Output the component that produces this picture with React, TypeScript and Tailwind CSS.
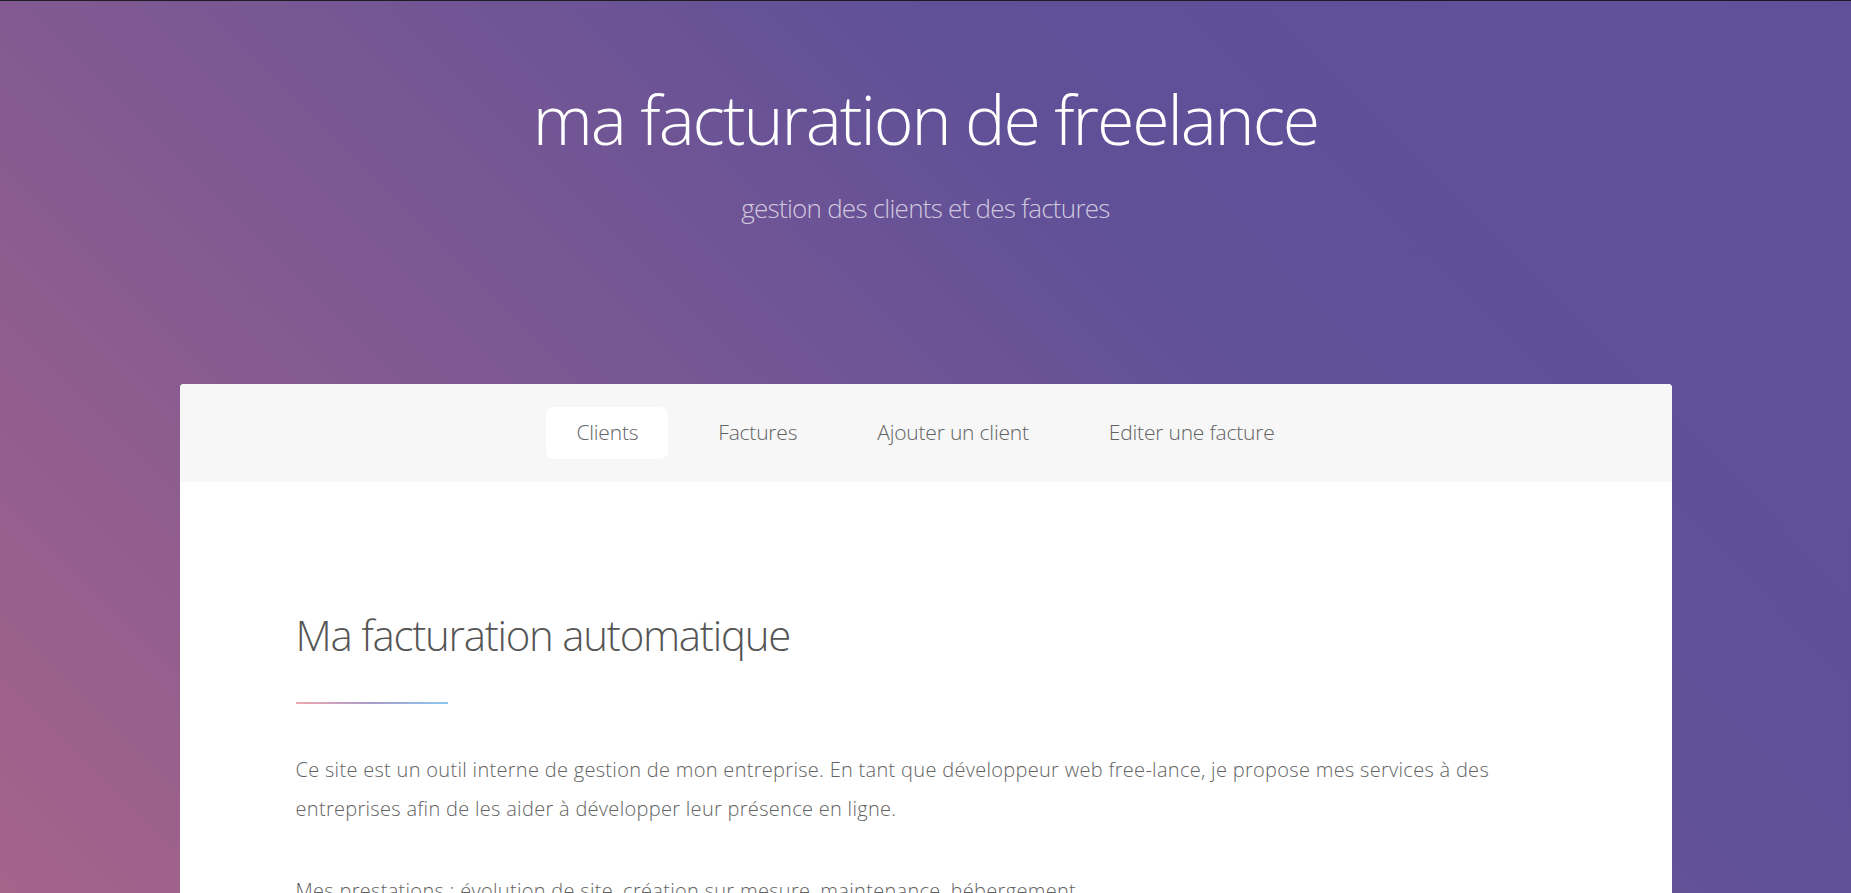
const navItems = ["Clients", "Factures", "Ajouter un client", "Editer une facture"];

export default function App() {
  return (
    <div className="min-h-screen border-t border-[#1f1d24] bg-[linear-gradient(45deg,#a5638a_0%,#835a91_32%,#5f5098_66%,#5e519a_100%)] bg-fixed pb-24 font-['Open_Sans',sans-serif]">
      {/* Header */}
      <header className="pt-[78px] text-center text-white">
        <h1 className="text-[68px] font-light leading-[80px] tracking-[-2.1px]">ma facturation de freelance</h1>
        <p className="mt-[32px] text-[26px] font-light leading-[34px] tracking-[-0.75px] text-white/70">
          gestion des clients et des factures
        </p>
      </header>

      {/* Card */}
      <div className="mx-auto mt-[159px] w-[1492px] rounded bg-white">
        <nav className="flex justify-center gap-5 rounded-t bg-[#f7f7f7] py-[23px]">
          {navItems.map((item, i) => (
            <a
              key={item}
              className={`flex h-[52px] items-center rounded-lg px-[30px] text-[21px] font-light tracking-[-0.2px] text-[#636363] ${
                i === 0 ? "bg-white" : ""
              }`}
            >
              {item}
            </a>
          ))}
        </nav>

        {/* Content */}
        <section className="px-[116px] pb-16 pt-[125px] text-[#636363]">
          <h2 className="text-[42px] font-light leading-[56px] tracking-[-1.25px] text-[#555]">
            Ma facturation automatique
          </h2>
          <div className="mt-[39px] h-[2px] w-[152px] bg-[linear-gradient(90deg,#efa8b0,#a89cc8,#8cc9f0)]" />
          <p className="mt-[47px] text-[20px] font-light leading-[38.5px] tracking-[0.3px]">
            Ce site est un outil interne de gestion de mon entreprise. En tant que développeur web free-lance, je
            propose mes services à des entreprises afin de les aider à développer leur présence en ligne.
          </p>
          <p className="mt-[44px] text-[20px] font-light leading-[38.5px] tracking-[0.3px]">
            Mes prestations : évolution de site, création sur mesure, maintenance, hébergement.
          </p>
        </section>
      </div>
    </div>
  );
}
